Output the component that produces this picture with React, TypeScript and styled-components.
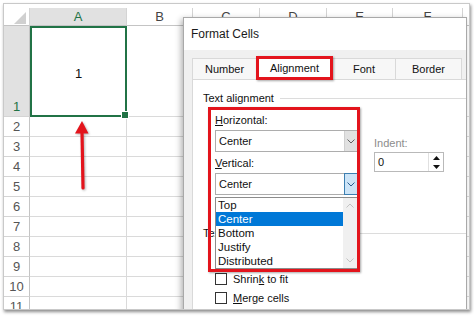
import React from "react";
import styled, { createGlobalStyle, css } from "styled-components";

const GlobalStyle = createGlobalStyle`
  html, body {
    margin: 0;
    padding: 0;
    background: #fff;
  }
  body {
    font-family: "Liberation Sans", Arial, sans-serif;
  }
  * {
    box-sizing: border-box;
  }
`;

// last column is only a sliver at the right edge, so it has no letter
const columns = ["A", "B", "C", "D", "E", "F", ""];
const rows = [1, 2, 3, 4, 5, 6, 7, 8, 9, 10, 11];
const options = ["Top", "Center", "Bottom", "Justify", "Distributed"];

const Chevron = ({ up, color }: { up?: boolean; color: string }) => (
  <svg width="8" height="5" viewBox="0 0 8 5">
    <polyline
      points={up ? "0.5,4.5 4,1 7.5,4.5" : "0.5,0.5 4,4 7.5,0.5"}
      fill="none"
      stroke={color}
      strokeWidth="1"
    />
  </svg>
);

const Triangle = ({ up }: { up?: boolean }) => (
  <svg width="7" height="4" viewBox="0 0 7 4">
    <polygon points={up ? "0,4 3.5,0 7,4" : "0,0 7,0 3.5,4"} fill="#111" />
  </svg>
);

const App = () => {
  return (
    <Page>
      <GlobalStyle />
      <Frame>
        <Sheet>
          <Corner />
          {columns.map((c, i) => (
            <ColHead key={i} $selected={c === "A"}>
              {c}
            </ColHead>
          ))}
          {rows.map((r) => (
            <React.Fragment key={r}>
              <RowHead $selected={r === 1}>{r}</RowHead>
              {columns.map((c, i) =>
                r === 1 && c === "A" ? (
                  <ActiveCell key={i}>1</ActiveCell>
                ) : (
                  <Cell key={i} />
                )
              )}
            </React.Fragment>
          ))}
        </Sheet>

        <Arrow width="22" height="76" viewBox="0 0 22 76">
          <line x1="10" y1="13" x2="11" y2="70" stroke="#e3141c" strokeWidth="3.2" strokeLinecap="round" />
          <polygon points="10,3 3,15.5 16.5,15.5" fill="#e3141c" />
        </Arrow>

        <Dialog>
          <TitleBar>Format Cells</TitleBar>
          <Body>
            <Tabs>
              <Tab $w={65}>Number</Tab>
              <Tab $w={77} $active>
                Alignment
              </Tab>
              <Tab $w={64}>Font</Tab>
              <Tab $w={67}>Border</Tab>
            </Tabs>
            <TabPage>
              <GroupHeading>Text alignment</GroupHeading>
              <AlignRow>
                <FieldColumn>
                  <Callout />
                  <FieldLabel>
                    <Key>H</Key>orizontal:
                  </FieldLabel>
                  <Select>
                    <SelectValue>Center</SelectValue>
                    <SelectButton>
                      <Chevron color="#606060" />
                    </SelectButton>
                  </Select>
                  <FieldLabel>
                    <Key>V</Key>ertical:
                  </FieldLabel>
                  <Select>
                    <SelectValue>Center</SelectValue>
                    <SelectButton $open>
                      <Chevron color="#2a5d8f" />
                    </SelectButton>
                    <ListBox>
                      <ListItems>
                        {options.map((o) => (
                          <ListItem key={o} $selected={o === "Center"}>
                            {o}
                          </ListItem>
                        ))}
                      </ListItems>
                      <ScrollBar>
                        <Chevron up color="#c2c2c2" />
                        <Chevron color="#c2c2c2" />
                      </ScrollBar>
                    </ListBox>
                  </Select>
                </FieldColumn>
                <IndentColumn>
                  <FieldLabel $disabled>Indent:</FieldLabel>
                  <Spin>
                    <SpinValue>0</SpinValue>
                    <SpinButtons>
                      <SpinButton>
                        <Triangle up />
                      </SpinButton>
                      <SpinButton>
                        <Triangle />
                      </SpinButton>
                    </SpinButtons>
                  </Spin>
                </IndentColumn>
              </AlignRow>
              <ControlHeading>Text control</ControlHeading>
              <CheckList>
                <CheckRow>
                  <CheckBox />
                  <span>
                    Shrin<Key>k</Key> to fit
                  </span>
                </CheckRow>
                <CheckRow>
                  <CheckBox />
                  <span>
                    <Key>M</Key>erge cells
                  </span>
                </CheckRow>
              </CheckList>
            </TabPage>
          </Body>
        </Dialog>
      </Frame>
    </Page>
  );
};

export default App;

const Page = styled.div`
  width: 474px;
  height: 318px;
  padding: 3px 0 0 3px;
  background: #fff;
`;

const Frame = styled.div`
  position: relative;
  width: 467px;
  height: 307px;
  padding-top: 4px;
  border: 1px solid #c9c9c9;
  box-shadow: 1px 2px 3px rgba(0, 0, 0, 0.45);
  overflow: hidden;
  background: #fff;
`;

const Sheet = styled.div`
  display: grid;
  grid-template-columns: 26px 97px 66px 67px 67px 66px 70px 40px;
  grid-template-rows: 18px 91px repeat(10, 20px);
`;

const Corner = styled.div`
  position: relative;
  background: #fff;
  border-right: 1px solid #d4d4d4;
  border-bottom: 1px solid #c4c4c4;

  &::after {
    content: "";
    position: absolute;
    right: 3px;
    bottom: 1px;
    width: 12px;
    height: 12px;
    background: #d0d0d0;
    clip-path: polygon(100% 0, 100% 100%, 0 100%);
  }
`;

const ColHead = styled.div<{ $selected?: boolean }>`
  display: flex;
  align-items: center;
  justify-content: center;
  font-size: 13px;
  color: ${(p) => (p.$selected ? "#217346" : "#444")};
  background: ${(p) => (p.$selected ? "#e1e1e1" : "#fff")};
  border-right: 1px solid #d4d4d4;
  border-bottom: 1px solid #c4c4c4;
`;

const RowHead = styled.div<{ $selected?: boolean }>`
  display: flex;
  align-items: flex-end;
  justify-content: center;
  line-height: 19px;
  font-size: 13px;
  color: ${(p) => (p.$selected ? "#217346" : "#555")};
  background: ${(p) => (p.$selected ? "#e1e1e1" : "#fff")};
  border-right: 1px solid #c4c4c4;
  border-bottom: 1px solid #d4d4d4;
`;

const Cell = styled.div`
  border-right: 1px solid #dadada;
  border-bottom: 1px solid #dadada;
`;

const ActiveCell = styled.div`
  position: relative;
  display: flex;
  align-items: center;
  justify-content: center;
  padding-top: 3px;
  font-size: 13px;
  color: #111;
  border: 2px solid #217346;

  &::after {
    content: "";
    position: absolute;
    right: -4px;
    bottom: -4px;
    width: 6px;
    height: 6px;
    background: #217346;
    border: 1px solid #fff;
  }
`;

const Arrow = styled.svg`
  position: absolute;
  left: 68px;
  top: 114px;
  filter: drop-shadow(1px 1px 1px rgba(0, 0, 0, 0.3));
`;

const Dialog = styled.div`
  position: absolute;
  left: 179px;
  top: 13px;
  width: 284px;
  height: 320px;
  display: flex;
  flex-direction: column;
  background: #f0f0f0;
  border: 1px solid #a9a9a9;
  box-shadow: -2px 2px 6px rgba(0, 0, 0, 0.3);
  color: #111;
`;

const TitleBar = styled.div`
  height: 32px;
  display: flex;
  align-items: center;
  padding-left: 7px;
  background: #fff;
  font-size: 12px;
  color: #1a1a1a;
`;

const Body = styled.div`
  flex: 1;
  display: flex;
  flex-direction: column;
  padding: 8px 0 0 8px;
`;

const Tabs = styled.div`
  display: flex;
  height: 21px;
`;

const Tab = styled.div<{ $w: number; $active?: boolean }>`
  width: ${(p) => p.$w}px;
  display: flex;
  align-items: center;
  justify-content: center;
  margin-right: -1px;
  font-size: 11px;
  background: #f7f7f7;
  border: 1px solid #d9d9d9;
  border-bottom: none;

  ${(p) =>
    p.$active &&
    css`
      position: relative;
      z-index: 1;
      height: 24px;
      margin-top: -2px;
      background: #fff;
      border: 3px solid #e3141c;
      box-shadow: 1px 1px 2px rgba(0, 0, 0, 0.35);
    `}
`;

const TabPage = styled.div`
  flex: 1;
  padding: 11px 0 0 10px;
  background: #fff;
  border: 1px solid #d9d9d9;
  border-right: none;
  font-size: 11px;
`;

const GroupHeading = styled.div`
  display: flex;
  align-items: center;
  gap: 6px;
  height: 14px;
  line-height: 14px;

  &::after {
    content: "";
    flex: 1;
    height: 1px;
    background: #dcdcdc;
  }
`;

const ControlHeading = styled(GroupHeading)`
  margin-top: 31px;
`;

const AlignRow = styled.div`
  display: flex;
  align-items: flex-start;
  margin: 8px 0 0 12px;
`;

const FieldColumn = styled.div`
  position: relative;
  width: 143px;
  display: flex;
  flex-direction: column;
`;

const Callout = styled.div`
  position: absolute;
  left: -7px;
  top: -6px;
  width: 152px;
  height: 165px;
  border: 3px solid #e3141c;
  box-shadow: 1px 1px 2px rgba(0, 0, 0, 0.35);
  pointer-events: none;
  z-index: 3;
`;

const Key = styled.u`
  text-decoration: underline;
  text-underline-offset: 1px;
`;

const Select = styled.div`
  position: relative;
  display: flex;
  height: 22px;
  margin-top: 3px;
  background: #fff;
  border: 1px solid #adadad;
`;

const FieldLabel = styled.div<{ $disabled?: boolean }>`
  height: 14px;
  line-height: 14px;
  color: ${(p) => (p.$disabled ? "#8c8c8c" : "#111")};

  ${Select} + & {
    margin-top: 4px;
  }
`;

const SelectValue = styled.div`
  flex: 1;
  display: flex;
  align-items: center;
  padding-left: 3px;
`;

const SelectButton = styled.div<{ $open?: boolean }>`
  width: 13px;
  display: flex;
  align-items: center;
  justify-content: center;
  background: ${(p) => (p.$open ? "#cce4f7" : "#e1e1e1")};
  border-left: 1px solid ${(p) => (p.$open ? "#3c7fb1" : "#d0d0d0")};
  ${(p) =>
    p.$open &&
    css`
      margin: -1px -1px -1px 0;
      width: 14px;
      border: 1px solid #3c7fb1;
    `}
`;

const ListBox = styled.div`
  position: absolute;
  left: -1px;
  top: calc(100% + 3px);
  width: 143px;
  height: 72px;
  display: flex;
  background: #fff;
  border: 1px solid #8c8c8c;
  z-index: 2;
`;

const ListItems = styled.div`
  flex: 1;
`;

const ListItem = styled.div<{ $selected?: boolean }>`
  height: 14px;
  line-height: 14px;
  padding-left: 2px;
  font-size: 11.5px;
  color: ${(p) => (p.$selected ? "#fff" : "#111")};
  background: ${(p) => (p.$selected ? "#0078d7" : "transparent")};
`;

const ScrollBar = styled.div`
  width: 14px;
  display: flex;
  flex-direction: column;
  align-items: center;
  justify-content: space-between;
  padding: 5px 0;
  background: #f0f0f0;
`;

const IndentColumn = styled.div`
  display: flex;
  flex-direction: column;
  margin: 23px 0 0 16px;
`;

const Spin = styled.div`
  display: flex;
  width: 70px;
  height: 20px;
  margin-top: 2px;
  background: #fff;
  border: 1px solid #b9b9b9;
`;

const SpinValue = styled.div`
  flex: 1;
  display: flex;
  align-items: center;
  padding-left: 3px;
`;

const SpinButtons = styled.div`
  width: 15px;
  display: flex;
  flex-direction: column;
  border-left: 1px solid #e0e0e0;
`;

const SpinButton = styled.div`
  flex: 1;
  display: flex;
  align-items: center;
  justify-content: center;
`;

const CheckList = styled.div`
  display: flex;
  flex-direction: column;
  margin: 29px 0 0 12px;
`;

const CheckRow = styled.label`
  display: flex;
  align-items: center;
  gap: 6px;
  height: 19px;
`;

const CheckBox = styled.span`
  width: 12px;
  height: 12px;
  background: #fff;
  border: 1px solid #333;
`;
